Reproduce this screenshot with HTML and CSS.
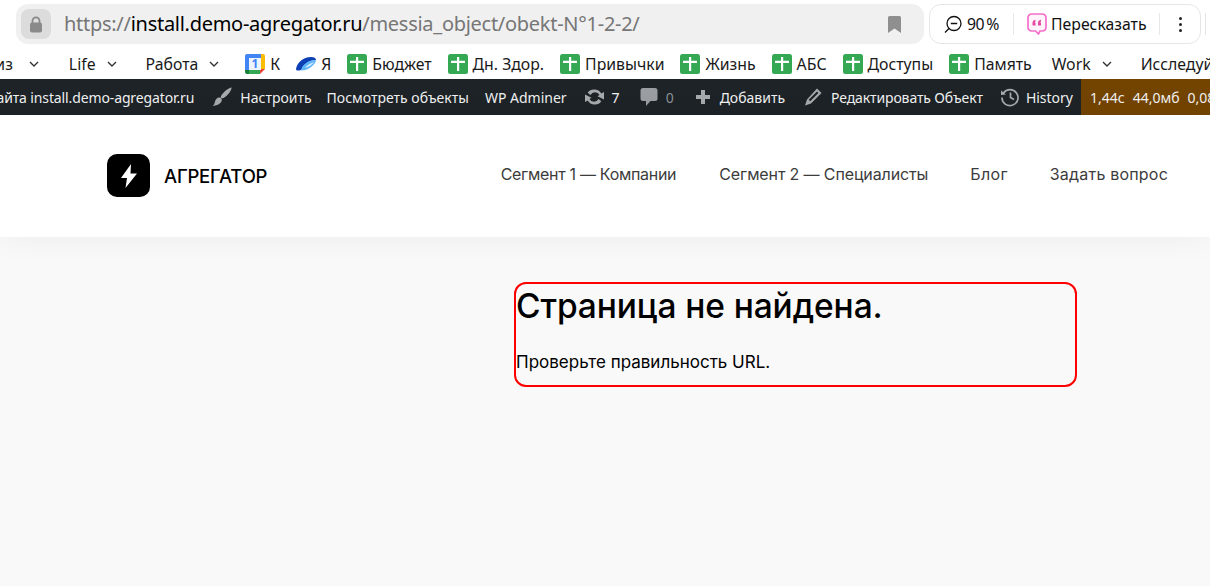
FILE: index.html
```html
<!DOCTYPE html>
<html lang="ru">
<head>
<meta charset="utf-8">
<title>Страница не найдена</title>
<link rel="stylesheet" href="styles.css">
</head>
<body>
<div class="toolbar">
  <div class="address">
    <span class="lock"><svg width="14" height="17" viewBox="0 0 14 17"><path d="M3.500 7V4.800a3.500 3.500 0 0 1 7 0V7" fill="none" stroke="#8a8a8a" stroke-width="1.800"/><rect x="1" y="6.500" width="12" height="10" rx="2" fill="#8a8a8a"/></svg></span>
    <span class="url"><span class="dim">https://</span>install.demo-agregator.ru<span class="dim">/messia_object/obekt-N°1-2-2/</span></span>
    <svg class="mark" width="13" height="17" viewBox="0 0 13 17"><path d="M0 1.500A1.500 1.500 0 0 1 1.500 0h10A1.500 1.500 0 0 1 13 1.500V17L6.500 12.500 0 17z" fill="#8f8f8f"/></svg>
  </div>
  <div class="pill">
    <span class="zoom"><svg width="18" height="19" viewBox="0 0 18 19"><circle cx="10" cy="8.500" r="7" fill="none" stroke="#111" stroke-width="1.300"/><path d="M6.800 8.500h6.400M5 13.500L1 17.500" stroke="#111" stroke-width="1.300" fill="none"/></svg>90 %</span>
    <span class="sep"></span>
    <span class="retell"><svg width="20" height="22" viewBox="0 0 20 22"><path d="M4.500 1h11A3.500 3.500 0 0 1 19 4.500v10a3.500 3.500 0 0 1-3.500 3.500h-2.500l-1.500 3-3-3h-4A3.500 3.500 0 0 1 1 14.500v-10A3.500 3.500 0 0 1 4.500 1z" fill="#fff4fb" stroke="#f66fcb" stroke-width="1.700"/><path d="M5.500 12.500V10c0-1.500 1-3 3-3.200v1.600c-.6.200-.9.500-.9 1h.9v3.100zM11 12.500V10c0-1.500 1-3 3-3.200v1.600c-.6.200-.9.500-.9 1h.9v3.100z" fill="#e5489f"/></svg>Пересказать</span>
    <span class="sep"></span>
    <span class="dots"><i></i><i></i><i></i></span>
  </div>
  <span class="edge"></span>
</div>

<nav class="bookmarks">
  <span class="bm folder first">Сервиз<svg class="chev" width="10" height="6" viewBox="0 0 10 6"><path d="M1 1l4 4 4-4"/></svg></span>
  <span class="bm folder">Life<svg class="chev" width="10" height="6" viewBox="0 0 10 6"><path d="M1 1l4 4 4-4"/></svg></span>
  <span class="bm folder work">Работа<svg class="chev" width="10" height="6" viewBox="0 0 10 6"><path d="M1 1l4 4 4-4"/></svg></span>
  <span class="bm"><svg width="20" height="20" viewBox="0 0 20 20"><path d="M4 0h12v4H4z" fill="#4285f4"/><path d="M0 2a2 2 0 0 1 2-2h2v16H0z" fill="#4285f4"/><path d="M16 0h2a2 2 0 0 1 2 2v2h-4zM16 4h4v11h-4z" fill="#fbbc04"/><path d="M4 16h11v4H4z" fill="#34a853"/><path d="M0 16h4v4H2a2 2 0 0 1-2-2z" fill="#188038"/><path d="M15 15h5l-5 5z" fill="#ea4335"/><path d="M4 4h12v12H4z" fill="#eef4fe"/><text x="10" y="14" class="cal">1</text></svg>К</span>
  <span class="bm"><svg width="20" height="14" viewBox="0 0 20 14"><path d="M0 12C1 6 7 0 15 0c3 0 5 1 5 3C13 3 8 7 6 12c-2 2-6 2-6 0z" fill="#0d3fb5"/><path d="M5 13.500C6 8 11 3.500 20 3c0 4-7 10.500-15 10.500z" fill="#5fb4f7"/><path d="M9 11c2-3 6-5 9-6-2 3-5 5-9 6z" fill="#d6eeff"/></svg>Я</span>
  <span class="bm"><svg class="sheet" viewBox="0 0 20 20"><use href="#plus"/></svg>Бюджет</span>
  <span class="bm"><svg class="sheet" viewBox="0 0 20 20"><use href="#plus"/></svg>Дн. Здор.</span>
  <span class="bm"><svg class="sheet" viewBox="0 0 20 20"><use href="#plus"/></svg>Привычки</span>
  <span class="bm"><svg class="sheet" viewBox="0 0 20 20"><use href="#plus"/></svg>Жизнь</span>
  <span class="bm"><svg class="sheet" viewBox="0 0 20 20"><use href="#plus"/></svg>АБС</span>
  <span class="bm"><svg class="sheet" viewBox="0 0 20 20"><use href="#plus"/></svg>Доступы</span>
  <span class="bm before-work"><svg class="sheet" viewBox="0 0 20 20"><use href="#plus"/></svg>Память</span>
  <span class="bm folder">Work<svg class="chev" width="10" height="6" viewBox="0 0 10 6"><path d="M1 1l4 4 4-4"/></svg></span>
  <span class="bm last">Исследуйте</span>
</nav>
<svg class="defs" width="0" height="0"><defs><g id="plus"><rect width="20" height="20" rx="2.500" fill="#34a853"/><path d="M3 6.800h6V3h2.200v3.800H17v2.200h-5.800v8H9V9H3z" fill="#fff"/></g></defs></svg>

<div class="adminbar">
  <span class="ab site">Настройки сайта install.demo-agregator.ru</span>
  <span class="ab customize"><svg width="20" height="20" viewBox="0 0 20 20"><path d="M19.500.5c.4 2.500-3.500 8-8 10.500-1 .5-2 .5-2.500 0-.5-.7-.3-1.500.2-2.300C11.500 5 16.500.8 19.500.5z" fill="#a7aaad"/><path d="M8 10.500c1 .5 1.800 1.300 1.800 2.500 0 3-4 5.500-9.300 6 1.500-1 2-2.500 2.500-4.500.6-2.500 2.500-4.500 5-4z" fill="#a7aaad"/></svg>Настроить</span>
  <span class="ab">Посмотреть объекты</span>
  <span class="ab wp">WP Adminer</span>
  <span class="ab tight sync"><svg width="21" height="20" viewBox="0 0 21 20"><path d="M10.500 2.500a7.500 7.500 0 0 1 6.700 4.100L20 5v7.500l-6.500-3.200 2-1.200a5 5 0 0 0-9-.1L3.700 5.800a7.500 7.500 0 0 1 6.800-3.300zM10.500 17.500a7.500 7.500 0 0 1-6.700-4.100L1 15V7.500l6.500 3.200-2 1.200a5 5 0 0 0 9 .1l2.800 2.200a7.500 7.500 0 0 1-6.800 3.300z" fill="#a7aaad"/></svg>7</span>
  <span class="ab tight muted"><svg width="18" height="20" viewBox="0 0 18 20"><path d="M3 1h12a2.500 2.500 0 0 1 2.500 2.500v8A2.500 2.500 0 0 1 15 14h-4.500L6 19v-5H3a2.500 2.500 0 0 1-2.500-2.500v-8A2.500 2.500 0 0 1 3 1z" fill="#9a9da1"/></svg>0</span>
  <span class="ab add"><svg width="16" height="16" viewBox="0 0 16 16"><path d="M6 1h4v5h5v4h-5v5H6v-5H1V6h5z" fill="#a7aaad"/></svg>Добавить</span>
  <span class="ab edit"><svg width="18" height="18" viewBox="0 0 18 18"><path d="M13 .5l4.500 4.500L7 15.500 1 17.500l2-6zM4.700 11.800l1.500 1.500 8.300-8.300-1.500-1.500z" fill="#a7aaad" fill-rule="evenodd"/></svg>Редактировать Объект</span>
  <span class="ab hist"><svg width="20" height="20" viewBox="0 0 20 20"><path d="M3.500 6A8 8 0 1 1 2 10.500" fill="none" stroke="#a7aaad" stroke-width="1.700"/><path d="M1 3.500L6 7.500 1 8z" fill="#a7aaad"/><path d="M10.500 5.500v5l3.500 2" fill="none" stroke="#a7aaad" stroke-width="1.700"/></svg>History</span>
  <span class="qm"><span>1,44с</span><span>44,0мб</span><span>0,08с</span></span>
</div>

<header class="site-header">
  <a class="logo">
    <span class="logo-mark"><svg width="16" height="24" viewBox="0 0 16 24"><path d="M10 0L0 14h6l-1.500 10L16 9.500H9.500z" fill="#fff"/></svg></span>
    <span class="logo-text">АГРЕГАТОР</span>
  </a>
  <nav class="menu">
    <a class="seg-one">Сегмент 1 — Компании</a>
    <a>Сегмент 2 — Специалисты</a>
    <a class="blog">Блог</a>
    <a class="ask">Задать вопрос</a>
  </nav>
</header>

<main class="content">
  <section class="notfound">
    <h1>Страница не найдена.</h1>
    <p>Проверьте правильность URL.</p>
  </section>
</main>
</body>
</html>
```
FILE: styles.css
```css
* { box-sizing: border-box; }
html, body { margin: 0; height: 100%; }
body {
  width: 1210px;
  height: 586px;
  overflow: hidden;
  background: #f9f9f9;
  font-family: "Open Sans", "Noto Sans", sans-serif;
  display: flex;
  flex-direction: column;
}
.defs { position: absolute; }

.toolbar {
  height: 44px;
  flex: none;
  background: #fff;
  display: flex;
  align-items: flex-end;
  padding-left: 16px;
}
.address {
  width: 908px;
  height: 40px;
  background: #f0f0f0;
  border-radius: 12px;
  display: flex;
  align-items: center;
  padding: 0 23px 0 5px;
}
.lock {
  width: 30px;
  height: 30px;
  border-radius: 8px;
  background: #dcdcdc;
  display: flex;
  align-items: center;
  justify-content: center;
  margin-right: 13px;
}
.url { flex: 1; font: 20px/1 "Noto Sans", sans-serif; color: #000; white-space: nowrap; letter-spacing: -.28px; }
.dim { color: #767676; }
.mark { flex: none; }
.pill {
  width: 272px;
  height: 40px;
  margin-left: 5px;
  border: 1px solid #e6e6e6;
  border-radius: 12px;
  display: flex;
  align-items: center;
  font: 15.800px "Noto Sans", sans-serif;
  color: #111;
  padding-left: 14px;
}
.zoom, .retell { display: flex; align-items: center; white-space: nowrap; }
.zoom { word-spacing: -1.500px; letter-spacing: -.45px; }
.zoom svg { margin-right: 5px; }
.retell svg { margin-right: 4px; }
.sep { width: 1px; height: 22px; background: #e8e8e8; }
.pill .sep:nth-of-type(2) { margin: 0 13px 0 14px; }
.pill .sep:nth-of-type(4) { margin: 0 19px 0 12px; }
.dots { display: flex; flex-direction: column; gap: 3px; }
.dots i { width: 3px; height: 3px; border-radius: 50%; background: #222; display: block; }
.edge { width: 1px; height: 22px; background: #e4e4e4; margin: 0 0 9px 4px; }

.bookmarks {
  height: 35px;
  flex: none;
  background: #fff;
  display: flex;
  align-items: center;
  overflow: hidden;
  padding-top: 5px;
  font: 15.800px "Noto Sans", sans-serif;
  color: #1a1a1a;
  white-space: nowrap;
}
.bm { display: flex; align-items: center; flex: none; margin-right: 16px; gap: 5px; }
.bm.folder { margin-right: 29px; gap: 11px; }
.bm.first { margin-left: -42px; margin-right: 30px; gap: 16px; }
.bm.work { margin-right: 26px; }
.bm.before-work { margin-right: 20px; }
.bm.last { margin-right: 0; }
.chev { fill: none; stroke: #333; stroke-width: 1.400; }
.sheet { width: 20px; height: 20px; }
.cal { font: 700 12px "Noto Sans", sans-serif; fill: #4285f4; text-anchor: middle; }

.adminbar {
  height: 36px;
  flex: none;
  background: #1d2327;
  color: #f0f0f1;
  display: flex;
  align-items: center;
  overflow: hidden;
  font: 14px "Noto Sans", sans-serif;
  white-space: nowrap;
}
.ab { display: flex; align-items: center; gap: 8px; flex: none; margin-right: 16px; }
.ab.site { margin-left: -86px; margin-right: 18px; letter-spacing: -.12px; }
.ab.customize { margin-right: 15px; }
.ab.wp { margin-right: 17px; }
.ab.sync { gap: 7px; }
.ab.tight { margin-right: 20px; }
.ab.muted { color: #8c8f94; gap: 8px; margin-right: 21px; }
.ab.add { margin-right: 19px; gap: 9px; }
.ab.edit { margin-right: 17px; gap: 9px; letter-spacing: -.12px; }
.ab.hist { margin-right: 8px; gap: 6px; }
.qm {
  flex: 1;
  align-self: stretch;
  background: #734400;
  display: flex;
  align-items: center;
  gap: 8px;
  padding-left: 9px;
}

.site-header {
  height: 122px;
  flex: none;
  background: #fff;
  box-shadow: 0 2px 30px rgba(0, 0, 0, .05);
  display: flex;
  align-items: center;
  justify-content: space-between;
  padding: 0 42px 0 107px;
  position: relative;
}
.logo { display: flex; align-items: center; gap: 14px; }
.logo-mark {
  width: 43px;
  height: 43px;
  margin-bottom: 1px;
  border-radius: 10px;
  background: #000;
  display: flex;
  align-items: center;
  justify-content: center;
}
.logo-text { font: 500 18.500px "Inter", sans-serif; color: #000; letter-spacing: -.2px; }
.menu { display: flex; gap: 42px; font: 16px "Inter", sans-serif; color: #3c3c3c; margin-top: -4px; letter-spacing: -.12px; }
.seg-one { margin-right: 1px; letter-spacing: -.3px; }
.blog { letter-spacing: .35px; }
.ask { letter-spacing: .2px; }

.content { flex: 1; padding: 45px 133px 0 514px; }
.notfound {
  height: 105px;
  border: 2px solid #f00;
  border-radius: 12px;
  color: #000;
}
.notfound h1 { margin: 0; font: 500 33.500px/44px "Inter", sans-serif; letter-spacing: -.1px; }
.notfound p { margin: 22px 0 0; font: 17px/24px "Inter", sans-serif; }
```
